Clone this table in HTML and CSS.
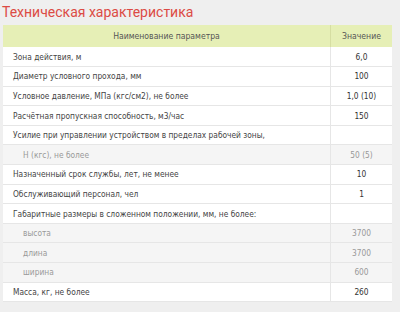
FILE: index.html
```html
<!DOCTYPE html>
<html lang="ru">
<head>
<meta charset="utf-8">
<link rel="stylesheet" href="styles.css">
</head>
<body>
<h1 class="title">Техническая характеристика</h1>
<table class="spec">
  <thead>
    <tr><th class="name">Наименование параметра</th><th class="val">Значение</th></tr>
  </thead>
  <tbody>
    <tr><td class="name">Зона действия, м</td><td class="val">6,0</td></tr>
    <tr><td class="name">Диаметр условного прохода, мм</td><td class="val">100</td></tr>
    <tr><td class="name">Условное давление, МПа (кгс/см2), не более</td><td class="val">1,0 (10)</td></tr>
    <tr><td class="name">Расчётная пропускная способность, м3/час</td><td class="val">150</td></tr>
    <tr><td class="name">Усилие при управлении устройством в пределах рабочей зоны,</td><td class="val"></td></tr>
    <tr class="sub"><td class="name">Н (кгс), не более</td><td class="val">50 (5)</td></tr>
    <tr><td class="name">Назначенный срок службы, лет, не менее</td><td class="val">10</td></tr>
    <tr><td class="name">Обслуживающий персонал, чел</td><td class="val">1</td></tr>
    <tr><td class="name">Габаритные размеры в сложенном положении, мм, не более:</td><td class="val"></td></tr>
    <tr class="sub"><td class="name">высота</td><td class="val">3700</td></tr>
    <tr class="sub"><td class="name">длина</td><td class="val">3700</td></tr>
    <tr class="sub"><td class="name">ширина</td><td class="val">600</td></tr>
    <tr><td class="name">Масса, кг, не более</td><td class="val">260</td></tr>
  </tbody>
</table>
</body>
</html>
```
FILE: styles.css
```css
html, body {
  margin: 0;
  padding: 0;
  background: #efefef;
}
body {
  font-family: "DejaVu Sans Condensed", "DejaVu Sans", sans-serif;
  color: #444;
}
.title {
  margin: 0;
  padding: 2px 0 0 2px;
  height: 25px;
  box-sizing: border-box;
  font-family: Roboto, "Open Sans", sans-serif;
  font-weight: 400;
  font-size: 14px;
  line-height: 20px;
  color: #dc4b45;
}
.spec {
  margin-left: 3px;
  width: 389px;
  border-collapse: collapse;
  background: #fff;
  font-size: 8.3px;
}
.spec th {
  height: 22px;
  padding: 0;
  background: #e6efb6;
  color: #555;
  font-weight: 400;
  font-size: 8.6px;
  text-align: center;
  border-right: 1px solid #d6dea2;
}
.spec th:last-child { border-right: 0; }
.spec td {
  height: 19.6px;
  box-sizing: border-box;
  padding: 0;
  border-bottom: 1px solid #e6e6e6;
  border-right: 1px solid #e6e6e6;
}
.spec td:last-child { border-right: 0; }
.spec td.name {
  padding-left: 10px;
}
.spec .val {
  width: 61px;
  text-align: center;
}
.spec td.val { color: #333; }
.spec tr.sub td {
  background: #f5f5f5;
  color: #999;
}
.spec tr.sub td.name { padding-left: 20px; }
.spec tr.sub td.val { color: #999; }
```
